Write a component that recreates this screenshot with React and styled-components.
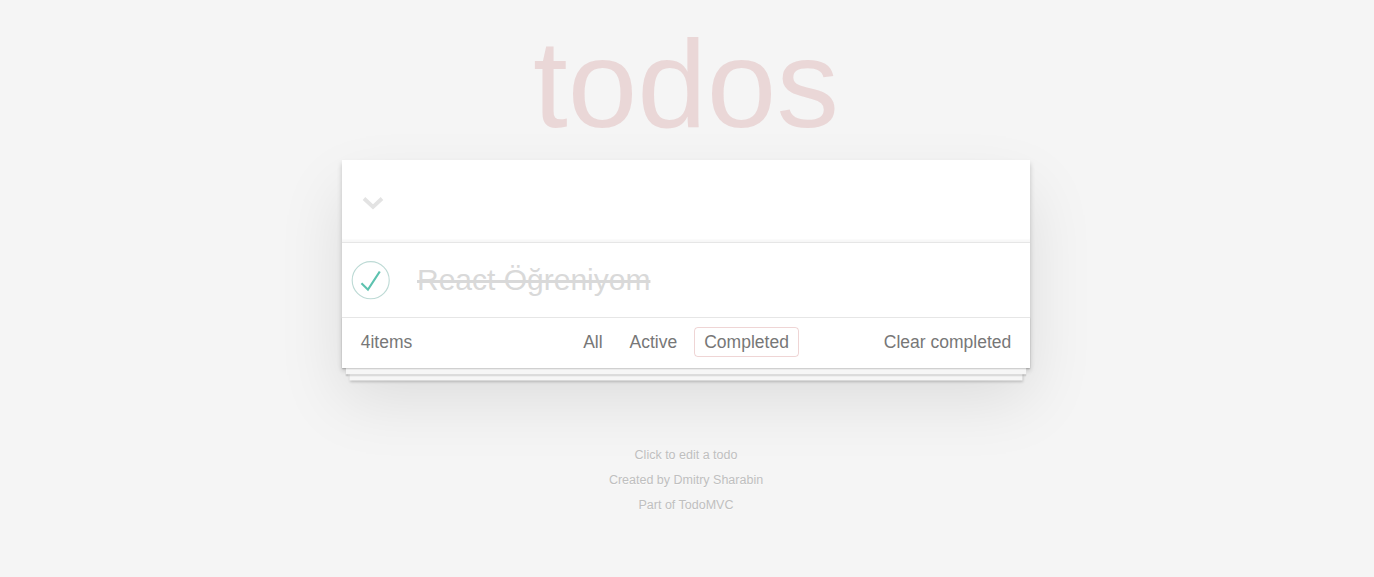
import React from 'react';
import styled, { createGlobalStyle } from 'styled-components';

const GlobalStyle = createGlobalStyle`
  html, body { margin: 0; padding: 0; }
  body {
    padding-right: 2px;
    font-family: 'Liberation Sans', Arial, sans-serif;
    font-size: 17.5px;
    line-height: 24.5px;
    font-weight: 300;
    background: #f5f5f5;
    color: #4d4d4d;
    -webkit-font-smoothing: antialiased;
  }
  * { box-sizing: content-box; }
`;

const Page = styled.div`
  width: 688px;
  margin: 0 auto;
`;

const Title = styled.h1`
  margin: 21px 0 14px;
  font-size: 125px;
  line-height: 125px;
  font-weight: 100;
  text-align: center;
  color: rgba(175, 47, 47, 0.15);
  text-rendering: optimizeLegibility;
`;

const TodoApp = styled.section`
  background: #fff;
  margin-bottom: 50px;
  box-shadow: 0 2.5px 5px 0 rgba(0, 0, 0, 0.2), 0 31px 62px 0 rgba(0, 0, 0, 0.1);
`;

const Header = styled.header`
  display: flex;
  align-items: center;
  height: 82px;
  box-shadow: inset 0 -2.5px 1px rgba(0, 0, 0, 0.03);
`;

const ToggleAll = styled.button`
  display: flex;
  align-items: center;
  width: 55px;
  height: 82px;
  padding: 4px 0 0 20px;
  border: 0;
  background: none;
  cursor: pointer;
  flex-shrink: 0;
`;

const NewTodo = styled.input`
  flex: 1;
  height: 42px;
  padding: 0 20px 0 0;
  border: 0;
  outline: none;
  background: transparent;
  font-family: inherit;
  font-size: 30px;
  color: #4d4d4d;
`;

const TodoList = styled.ul`
  list-style: none;
  margin: 0;
  padding: 0;
  border-top: 1px solid #e6e6e6;
`;

const TodoItem = styled.li`
  display: flex;
  align-items: center;
  font-size: 30px;
  border-bottom: ${(p) => (p.$last ? 'none' : '1px solid #ededed')};
`;

const Toggle = styled.button`
  width: 50px;
  height: 50px;
  padding: 0;
  border: 0;
  background: none;
  flex-shrink: 0;
  cursor: pointer;
  svg { display: block; }
`;

const Label = styled.label`
  flex: 1;
  padding: 18.75px 18.75px 18.75px 25px;
  line-height: 36px;
  font-weight: 400;
  color: ${(p) => (p.$done ? '#d9d9d9' : '#4d4d4d')};
  text-decoration: ${(p) => (p.$done ? 'line-through' : 'none')};
  word-break: break-all;
`;

const Footer = styled.footer`
  display: grid;
  grid-template-columns: 1fr auto 1fr;
  align-items: center;
  height: 25px;
  padding: 12px 18.75px 13px;
  border-top: 1px solid #e6e6e6;
  color: #777;
  box-shadow: 0 1.25px 1.25px rgba(0, 0, 0, 0.2),
    0 10px 0 -3.75px #f6f6f6,
    0 11.25px 1.25px -3.75px rgba(0, 0, 0, 0.2),
    0 20px 0 -7.5px #f6f6f6,
    0 21.25px 2.5px -7.5px rgba(0, 0, 0, 0.2);
`;

const Count = styled.span`
  justify-self: start;
`;

const Filters = styled.ul`
  margin: 0;
  padding: 0;
  list-style: none;
  text-align: center;
  white-space: nowrap;
`;

const FilterItem = styled.li`
  display: inline;
`;

const FilterLink = styled.a`
  color: inherit;
  margin: 3.75px;
  padding: 3.75px 8.75px;
  text-decoration: none;
  border: 1px solid ${(p) => (p.$selected ? 'rgba(175, 47, 47, 0.2)' : 'transparent')};
  border-radius: 3.75px;
  cursor: pointer;
  &:hover {
    border-color: ${(p) => (p.$selected ? 'rgba(175, 47, 47, 0.2)' : 'rgba(175, 47, 47, 0.1)')};
  }
`;

const ClearButton = styled.button`
  justify-self: end;
  padding: 0;
  border: 0;
  background: none;
  font: inherit;
  line-height: 25px;
  color: inherit;
  cursor: pointer;
`;

const Info = styled.footer`
  margin: 81px auto 0;
  color: #bfbfbf;
  font-size: 12.5px;
  text-shadow: 0 1px 0 rgba(255, 255, 255, 0.5);
  text-align: center;
`;

const InfoLine = styled.p`
  margin: 12.5px 0;
  line-height: 1;
`;

const Chevron = () => (
  <svg width="22" height="14" viewBox="0 0 22 14" aria-hidden="true">
    <polyline points="2,2.5 11,11 20,2.5" fill="none" stroke="#e3e3e3" strokeWidth="3.8" strokeLinecap="butt" strokeLinejoin="miter" />
  </svg>
);

const CheckCircle = ({ done }) => (
  <svg width="50" height="50" viewBox="-10 -18 100 135" aria-hidden="true">
    <circle cx="50" cy="50" r="50" fill="none" stroke={done ? '#bddad5' : '#ededed'} strokeWidth="3" />
    {done && <path fill="#5dc2af" d="M72 25L42 71 27 56l-4 4 20 20 34-52z" />}
  </svg>
);

const todos = [{ id: 1, title: 'React Öğreniyom', done: true }];
const filters = ['All', 'Active', 'Completed'];

export default function App() {
  return (
    <>
      <GlobalStyle />
      <Page>
        <Title>todos</Title>
        <TodoApp>
          <Header>
            <ToggleAll aria-label="Toggle all">
              <Chevron />
            </ToggleAll>
            <NewTodo aria-label="New todo" />
          </Header>
          <TodoList>
            {todos.map((t, i) => (
              <TodoItem key={t.id} $last={i === todos.length - 1}>
                <Toggle aria-label="Toggle">
                  <CheckCircle done={t.done} />
                </Toggle>
                <Label $done={t.done}>{t.title}</Label>
              </TodoItem>
            ))}
          </TodoList>
          <Footer>
            <Count>4items</Count>
            <Filters>
              {filters.map((f) => (
                <FilterItem key={f}>
                  <FilterLink $selected={f === 'Completed'}>{f}</FilterLink>
                </FilterItem>
              ))}
            </Filters>
            <ClearButton>Clear completed</ClearButton>
          </Footer>
        </TodoApp>
        <Info>
          <InfoLine>Click to edit a todo</InfoLine>
          <InfoLine>Created by Dmitry Sharabin</InfoLine>
          <InfoLine>Part of TodoMVC</InfoLine>
        </Info>
      </Page>
    </>
  );
}
